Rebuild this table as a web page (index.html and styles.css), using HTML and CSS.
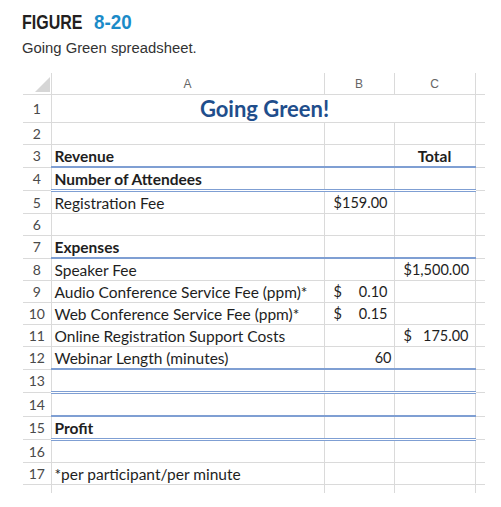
FILE: index.html
```html
<!DOCTYPE html>
<html>
<head>
<meta charset="utf-8">
<link rel="stylesheet" href="styles.css">
</head>
<body>
<div class="fig">
  <div class="cap"><span class="fig-label">FIGURE</span><span class="fig-num">8-20</span></div>
  <div class="sub"><span class="sub-text">Going Green spreadsheet.</span></div>
</div>
<table class="sheet">
  <colgroup><col class="c-rh"><col class="c-a"><col class="c-b"><col class="c-c"><col class="c-d"></colgroup>
  <tr class="hdr"><th class="rh corner"><span class="tri"></span></th><th>A</th><th>B</th><th>C</th><th class="d"></th></tr>
  <tr class="r1"><th class="rh">1</th><td colspan="3" class="title">Going Green!</td><td class="d"></td></tr>
  <tr><th class="rh">2</th><td></td><td></td><td></td><td class="d"></td></tr>
  <tr class="bl"><th class="rh">3</th><td class="b">Revenue</td><td></td><td class="b ctr">Total</td><td class="d"></td></tr>
  <tr class="dbl"><th class="rh">4</th><td class="b">Number of Attendees</td><td></td><td></td><td class="d"></td></tr>
  <tr><th class="rh">5</th><td>Registration Fee</td><td class="cur"><div class="acc"><span>$</span><span>159.00</span></div></td><td></td><td class="d"></td></tr>
  <tr><th class="rh">6</th><td></td><td></td><td></td><td class="d"></td></tr>
  <tr class="bl"><th class="rh">7</th><td class="b">Expenses</td><td></td><td></td><td class="d"></td></tr>
  <tr><th class="rh">8</th><td>Speaker Fee</td><td></td><td class="cur"><div class="acc"><span>$</span><span>1,500.00</span></div></td><td class="d"></td></tr>
  <tr><th class="rh">9</th><td>Audio Conference Service Fee (ppm)*</td><td class="cur"><div class="acc"><span>$</span><span>0.10</span></div></td><td></td><td class="d"></td></tr>
  <tr><th class="rh">10</th><td>Web Conference Service Fee (ppm)*</td><td class="cur"><div class="acc"><span>$</span><span>0.15</span></div></td><td></td><td class="d"></td></tr>
  <tr><th class="rh">11</th><td>Online Registration Support Costs</td><td></td><td class="cur"><div class="acc"><span>$</span><span>175.00</span></div></td><td class="d"></td></tr>
  <tr class="bl"><th class="rh">12</th><td>Webinar Length (minutes)</td><td class="num">60</td><td></td><td class="d"></td></tr>
  <tr class="dbl"><th class="rh">13</th><td></td><td></td><td></td><td class="d"></td></tr>
  <tr class="bl"><th class="rh">14</th><td></td><td></td><td></td><td class="d"></td></tr>
  <tr class="dbl"><th class="rh">15</th><td class="b">Profit</td><td></td><td></td><td class="d"></td></tr>
  <tr><th class="rh">16</th><td></td><td></td><td></td><td class="d"></td></tr>
  <tr><th class="rh">17</th><td>*per participant/per minute</td><td></td><td></td><td class="d"></td></tr>
  <tr class="r18"><th class="rh"></th><td></td><td></td><td></td><td class="d"></td></tr>
</table>
</body>
</html>
```
FILE: styles.css
```css
body {
  margin: 0;
  background: #fff;
  font-family: "Liberation Sans", sans-serif;
}
.fig {
  padding: 10px 0 0 22px;
  font-family: "Liberation Sans", sans-serif;
}
.cap {
  font-weight: bold;
  font-size: 20px;
  line-height: 24px;
  color: #231f20;
  display: flex;
}
.fig-label {
  display: inline-block;
  width: 60px;
  transform: scaleX(0.8);
  transform-origin: left center;
}
.fig-num {
  display: inline-block;
  color: #1b8bc8;
  margin-left: 12px;
  transform: scaleX(0.94);
  transform-origin: left center;
}
.sub {
  margin-top: 4px;
  font-size: 15.5px;
  line-height: 20px;
  color: #333;
}
.sub-text {
  display: inline-block;
  transform: scaleX(0.956);
  transform-origin: left center;
}
.sheet {
  margin: 15px 0 0 23px;
  border-collapse: collapse;
  table-layout: fixed;
  width: 462px;
  font-family: Lato, "Liberation Sans", sans-serif;
  font-size: 15.5px;
  color: #1e1e1e;
}
.c-rh { width: 28px; }
.c-a { width: 273px; }
.c-b { width: 70px; }
.c-c { width: 81px; }
.c-d { width: 10px; }
.sheet td, .sheet th {
  border: 1px solid #dadada;
  padding: 0 3px;
  height: 21px;
  white-space: nowrap;
  overflow: visible;
  font-weight: normal;
}
.sheet tr:first-child th { border-top: none; }
.sheet th.rh {
  border-left: none;
  color: #4a4a4a;
  font-size: 14px;
  text-align: center;
  padding: 0;
}
.sheet .d { border-right: none; padding: 0; }
.hdr th {
  height: 21px;
  color: #666;
  font-size: 12px;
  text-align: center;
  font-family: "Liberation Sans", sans-serif;
}
.corner { position: relative; }
.tri {
  position: absolute;
  right: 1px;
  bottom: 2px;
  width: 0;
  height: 0;
  border-left: 15px solid transparent;
  border-bottom: 15px solid #d6d6d6;
}
.r1 td { height: 27px; }
.title {
  text-align: center;
  color: #1f4e8c;
  font-weight: bold !important;
  font-size: 22px;
  padding-left: 6px !important;
}
.b { font-weight: bold !important; }
.ctr { text-align: center; }
.bl td:not(.d) { border-bottom: 2px solid #7f9fd3; }
.dbl td:not(.d) { border-bottom: 3px double #7f9fd3; }
.dbl td { height: 21px; }
.cur { padding: 0 6px 0 9px !important; font-size: 14.5px; }
.acc { display: flex; justify-content: space-between; }
.num { text-align: right; padding-right: 2px !important; font-size: 14.5px; }
.r18 td, .r18 th { height: 8px; border-bottom: none; }
```
